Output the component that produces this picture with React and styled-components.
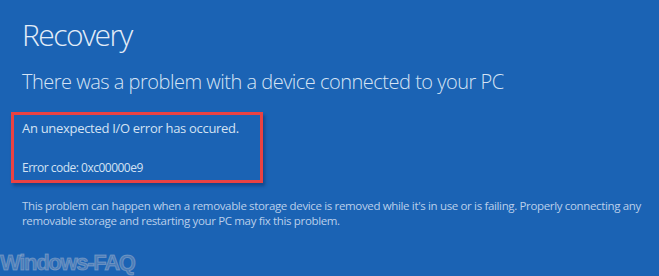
import React from "react";
import styled, { createGlobalStyle } from "styled-components";

const GlobalStyle = createGlobalStyle`
  html, body {
    margin: 0;
    padding: 0;
    background: #1b63b4;
  }
  body {
    font-family: "Open Sans", "Noto Sans", sans-serif;
  }
`;

const Screen = styled.div`
  position: relative;
  width: 659px;
  height: 276px;
  overflow: hidden;
  background: #1b63b4;
  color: #dbe7f5;
  padding: 15px 0 0 22px;
  box-sizing: border-box;
  display: flex;
  flex-direction: column;
`;

const Title = styled.h1`
  margin: 0;
  font-size: 30px;
  font-weight: 300;
  line-height: 40px;
  letter-spacing: -1.5px;
  color: #e3edf8;
`;

const Subtitle = styled.h2`
  margin: 14px 0 0;
  font-size: 20px;
  font-weight: 300;
  line-height: 26px;
  letter-spacing: -0.5px;
  color: #d6e4f4;
`;

const ErrorBox = styled.div`
  margin: 17px 0 0 -11px;
  width: 252px;
  height: 71px;
  box-sizing: border-box;
  border: 3px solid #ea4242;
  box-shadow: 2px 3px 3px rgba(10, 40, 90, 0.45);
  padding: 4px 0 0 8px;
  display: flex;
  flex-direction: column;
`;

const ErrorLine = styled.div`
  font-size: ${(p) => p.size}px;
  line-height: ${(p) => p.lh}px;
  letter-spacing: ${(p) => p.ls}px;
  margin-top: ${(p) => p.gap || 0}px;
  white-space: nowrap;
  color: #d3e2f3;
`;

const Note = styled.p`
  margin: 16px 0 0;
  font-size: 11.5px;
  line-height: 14.5px;
  letter-spacing: -0.35px;
  color: #bacfeb;
  width: 630px;
`;

const Watermark = styled.div`
  position: absolute;
  left: 0;
  bottom: 2px;
  font-family: "Liberation Sans", sans-serif;
  font-weight: bold;
  font-size: 22px;
  line-height: 22px;
  letter-spacing: -1.3px;
  color: rgba(120, 150, 190, 0.55);
  -webkit-text-stroke: 1px rgba(170, 185, 210, 0.45);
`;

export default function App() {
  return (
    <>
      <GlobalStyle />
      <Screen>
        <Title>Recovery</Title>
        <Subtitle>There was a problem with a device connected to your PC</Subtitle>
        <ErrorBox>
          <ErrorLine size={13} lh={18} ls={-0.3}>
            An unexpected I/O error has occured.
          </ErrorLine>
          <ErrorLine size={12} lh={16} ls={-0.5} gap={23}>
            Error code: 0xc00000e9
          </ErrorLine>
        </ErrorBox>
        <Note>
          This problem can happen when a removable storage device is removed while it's in use or
          is failing. Properly connecting any removable storage and restarting your PC may fix
          this problem.
        </Note>
        <Watermark>Windows-FAQ</Watermark>
      </Screen>
    </>
  );
}
